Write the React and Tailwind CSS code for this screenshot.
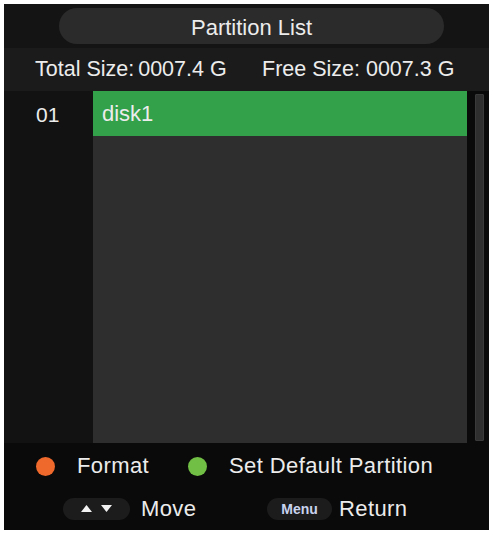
export default function App() {
    const font = { fontFamily: '"Liberation Sans", Arial, sans-serif' }

    return (
        <div className="w-[493px] h-[536px] bg-white pl-[4px] pt-[4px]" style={font}>
            <div className="w-[485px] h-[526px] bg-[#0a0a0a] flex flex-col text-[#ececec]">
                {/* Title */}
                <div className="h-[44px] bg-[#141414] flex items-center pl-[55px]">
                    <div className="w-[385px] h-[36px] rounded-full bg-[#2b2b2b] flex items-center justify-center pt-[3px] text-[22px] leading-none">
                        Partition List
                    </div>
                </div>

                {/* Sizes */}
                <div className="h-[43px] bg-[#1b1b1b] flex items-center text-[21.5px] leading-none">
                    <span className="ml-[31px] w-[227px]">Total Size:<span className="ml-[4px]">0007.4 G</span></span>
                    <span>Free Size: 0007.3 G</span>
                </div>

                {/* List */}
                <div className="h-[352px] flex">
                    <div className="w-[89px] bg-[#121212] pt-[12px] pl-[32px] text-[21px] leading-[24px]">01</div>
                    <div className="w-[374px] bg-[#2e2e2e] flex flex-col">
                        <div className="h-[45px] bg-[#33a04a] flex items-center pl-[9px] text-[22px] leading-none">disk1</div>
                    </div>
                    <div className="w-[8px]" />
                    <div className="w-[9px] pt-[3px] pb-[2px]">
                        <div className="h-full bg-[#2f2f2f] border border-[#3a3a3a] rounded-[1px]" />
                    </div>
                </div>

                {/* Footer */}
                <div className="flex-1 flex flex-col text-[22px] leading-none tracking-[0.4px]">
                    <div className="h-[45px] flex items-center pl-[32px] pt-[1px]">
                        <span className="w-[19px] h-[19px] rounded-full bg-[#f0692c]" />
                        <span className="ml-[22px] w-[111px]">Format</span>
                        <span className="w-[19px] h-[19px] rounded-full bg-[#71bf44]" />
                        <span className="ml-[22px]">Set Default Partition</span>
                    </div>
                    <div className="h-[40px] flex items-center pl-[59px] pt-[1px]">
                        <span className="w-[67px] h-[22px] rounded-full bg-[#1c1c1c] flex items-center justify-center gap-[9px] text-white">
                            <svg width="11" height="7" viewBox="0 0 11 7"><path d="M5.5 0L11 7H0z" fill="#f2f2f2" /></svg>
                            <svg width="11" height="7" viewBox="0 0 11 7"><path d="M0 0H11L5.5 7z" fill="#f2f2f2" /></svg>
                        </span>
                        <span className="ml-[11px] w-[126px]">Move</span>
                        <span className="w-[65px] h-[22px] rounded-full bg-[#1c1c1c] flex items-center justify-center text-[14px] font-bold tracking-normal text-[#c9d3ee]">Menu</span>
                        <span className="ml-[7px]">Return</span>
                    </div>
                </div>
            </div>
        </div>
    )
}
